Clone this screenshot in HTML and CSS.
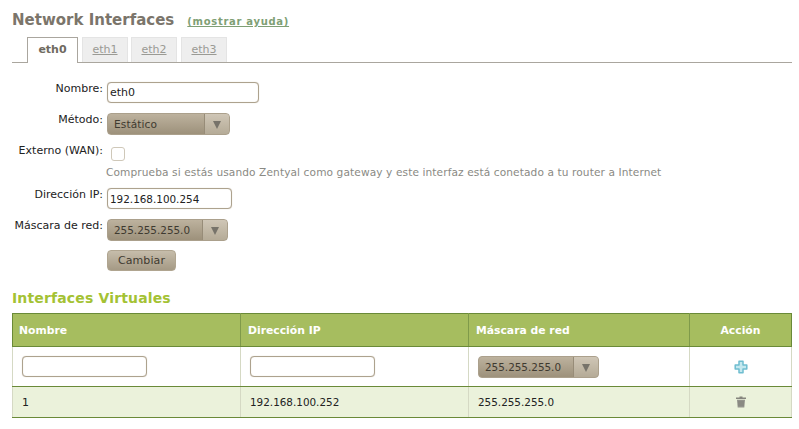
FILE: index.html
```html
<!DOCTYPE html>
<html lang="es">
<head>
  <meta charset="UTF-8">
  <title>Network Interfaces</title>
  <link rel="stylesheet" href="styles.css">
</head>

<body>
  <div class="page">
    <div class="title-row">
      <h1 class="title">Network Interfaces</h1>
      <a class="help-link" href="#">(mostrar ayuda)</a>
    </div>

    <ul class="tabs">
      <li class="tab active">eth0</li>
      <li class="tab"><a href="#">eth1</a></li>
      <li class="tab"><a href="#">eth2</a></li>
      <li class="tab"><a href="#">eth3</a></li>
    </ul>

    <div class="form">
      <div class="row row-name">
        <label class="label">Nombre:</label>
        <input class="field field-name" type="text" value="eth0">
      </div>
      <div class="row row-method">
        <label class="label">Método:</label>
        <div class="select select-method">
          <span class="select-text">Estático</span>
          <span class="select-arrow"></span>
        </div>
      </div>
      <div class="row row-wan">
        <label class="label">Externo (WAN):</label>
        <div class="check-col">
          <span class="check"></span>
          <p class="hint">Comprueba si estás usando Zentyal como gateway y este interfaz está conetado a tu router a Internet</p>
        </div>
      </div>
      <div class="row row-ip">
        <label class="label">Dirección IP:</label>
        <input class="field field-ip" type="text" value="192.168.100.254">
      </div>
      <div class="row row-mask">
        <label class="label">Máscara de red:</label>
        <div class="select select-mask">
          <span class="select-text">255.255.255.0</span>
          <span class="select-arrow"></span>
        </div>
      </div>
      <div class="row row-submit">
        <span class="label"></span>
        <button class="btn" type="button">Cambiar</button>
      </div>
    </div>

    <h2 class="subtitle">Interfaces Virtuales</h2>

    <table class="data">
      <colgroup>
        <col class="col-name">
        <col class="col-ip">
        <col class="col-mask">
        <col class="col-action">
      </colgroup>
      <thead>
        <tr>
          <th>Nombre</th>
          <th>Dirección IP</th>
          <th>Máscara de red</th>
          <th class="center">Acción</th>
        </tr>
      </thead>
      <tbody>
        <tr class="add-row">
          <td><input class="field field-cell" type="text"></td>
          <td><input class="field field-cell" type="text"></td>
          <td>
            <div class="select select-cell">
              <span class="select-text">255.255.255.0</span>
              <span class="select-arrow"></span>
            </div>
          </td>
          <td class="center">
            <svg class="icon" width="14" height="14" viewBox="0 0 14 14">
              <path d="M5 1.2h4v3.800h3.800v4H9v3.800H5V9H1.200V5H5z" fill="#c4e8ef" stroke="#6fbdd0" stroke-width="1.500" stroke-linejoin="round"/>
            </svg>
          </td>
        </tr>
        <tr class="item-row">
          <td>1</td>
          <td class="num">192.168.100.252</td>
          <td class="num">255.255.255.0</td>
          <td class="center">
            <svg class="icon" width="12" height="12" viewBox="0 0 12 12">
              <path d="M4.500 .5h3v1h3.500v1.500H1V1.500h3.500z" fill="#85857d"/>
              <path d="M2 3.800h8l-.7 7.700H2.700z" fill="#93938c"/>
              <path d="M4 5v5M6 5v5M8 5v5" stroke="#7b7b74" stroke-width=".7"/>
            </svg>
          </td>
        </tr>
      </tbody>
    </table>
  </div>
</body>
</html>
```

FILE: styles.css
```css
* {
  box-sizing: border-box;
  padding: 0;
  margin: 0;
}
html, body {
  font-family: "DejaVu Sans", sans-serif;
  font-size: 11px;
  color: #222;
  background-color: #fff;
}
.page {
  width: 799px;
  height: 429px;
  padding: 11px 7px 0 12px;
  overflow: hidden;
}

/* title */
.title-row {
  display: flex;
  align-items: baseline;
  height: 26px;
}
.title {
  font-size: 15px;
  font-weight: bold;
  color: #7b756b;
}
.help-link {
  margin-left: 13px;
  font-size: 10px;
  font-weight: bold;
  letter-spacing: 0.7px;
  color: #7f9f75;
}

/* tabs */
.tabs {
  display: flex;
  list-style: none;
  height: 26px;
  padding-left: 15px;
  border-bottom: 1px solid #aaa69e;
}
.tab {
  width: 46px;
  height: 25px;
  margin-right: 3px;
  text-align: center;
  line-height: 24px;
  background-color: #eee;
  border: 1px solid #e4e4e4;
  border-bottom: 0;
}
.tab:nth-child(3) {
  margin-right: 4px;
}
.tab a {
  color: #9a9a94;
}
.tab.active {
  width: 51px;
  height: 26px;
  margin-right: 4px;
  font-weight: bold;
  color: #6f6a60;
  background-color: #fff;
  border: 1px solid #aaa69e;
  border-bottom: 0;
}

/* form */
.form {
  padding-top: 19px;
}
.row {
  display: flex;
  align-items: flex-start;
}
.label {
  flex: none;
  width: 91px;
  margin-right: 4px;
  text-align: right;
  line-height: 13px;
  white-space: nowrap;
}
.row-name { height: 31px; }
.row-method { height: 32px; }
.row-wan { height: 43px; }
.row-wan .label { line-height: 11px; }
.row-ip { height: 31px; }
.row-mask { height: 31px; }
.field {
  font-family: "DejaVu Sans", sans-serif;
  font-size: 11px;
  color: #222;
  height: 21px;
  padding: 0 2px;
  background-color: #fff;
  border: 1px solid #ada28e;
  border-radius: 4px;
  box-shadow: 0 0 1px #cdc5b5, inset 0 0 1px #d8d2c4;
  outline: 0;
}
.field-name { width: 152px; }
.field-ip {
  width: 125px;
  font-size: 10.4px;
}
.field-cell { width: 125px; display: block; }

.select {
  display: flex;
  height: 22px;
  line-height: 21px;
  color: #3f3a30;
  border: 1px solid #aba08c;
  border-radius: 4px;
  background: linear-gradient(#bdb29e, #9d917b);
  overflow: hidden;
}
.select-text {
  flex: 1;
  padding-left: 6px;
  font-size: 10.6px;
  letter-spacing: 0.1px;
}
.select-arrow {
  position: relative;
  flex: none;
  width: 25px;
  background: linear-gradient(#cfc6b6, #b5ab97);
  border-left: 1px solid #978c78;
}
.select-arrow::after {
  content: "";
  position: absolute;
  top: 7px;
  left: 8px;
  border-top: 8px solid #77736a;
  border-left: 4px solid transparent;
  border-right: 4px solid transparent;
}
.select-method { width: 123px; }
.select-mask { width: 121px; }
.select-cell { width: 121px; }
.select-mask .select-text,
.select-cell .select-text {
  font-size: 10.4px;
  letter-spacing: 0;
}

.check-col {
  padding-top: 2px;
}
.check {
  display: block;
  width: 14px;
  height: 14px;
  margin-left: 4px;
  border: 1px solid #cfc8b9;
  border-radius: 3px;
  background-color: #fff;
}
.hint {
  margin-top: 5px;
  margin-left: -1px;
  font-size: 10.6px;
  color: #8a8a84;
  letter-spacing: 0.1px;
  white-space: nowrap;
}

.btn {
  font-family: "DejaVu Sans", sans-serif;
  font-size: 11px;
  letter-spacing: 0.1px;
  width: 69px;
  height: 21px;
  color: #3f3a30;
  border: 1px solid #b0a590;
  border-radius: 4px;
  background: linear-gradient(#c6bdab, #a59a85);
}

/* table */
.subtitle {
  margin-top: 19px;
  height: 23px;
  font-size: 14px;
  font-weight: bold;
  letter-spacing: 0.15px;
  color: #a4c234;
}
.data {
  width: 779px;
  border-collapse: collapse;
  table-layout: fixed;
}
.col-name { width: 228px; }
.col-ip { width: 228px; }
.col-mask { width: 221px; }
.col-action { width: 102px; }
.data th {
  height: 33px;
  padding-left: 7px;
  text-align: left;
  font-size: 10.8px;
  color: #fff;
  background-color: #a6bd5f;
  border: 1px solid #6a8a38;
  border-left-color: #a6bd5f;
  border-right-color: #7f9a4a;
}
.data th:first-child {
  padding-left: 6px;
  border-left-color: #6a8a38;
}
.data th:last-child { border-right-color: #6a8a38; }
.data th.center {
  padding-left: 0;
  text-align: center;
}
.data td {
  padding-left: 9px;
  border-left: 1px solid #d5d9c4;
  border-right: 1px solid #d5d9c4;
  border-bottom: 1px solid #6a8a38;
}
.data td.center {
  padding-left: 0;
  text-align: center;
}
.data td.num {
  font-size: 10.4px;
}
.add-row td { height: 40px; }
.item-row td {
  height: 31px;
  background-color: #ebf2db;
}
.icon {
  display: block;
  margin: 0 auto;
}
```
